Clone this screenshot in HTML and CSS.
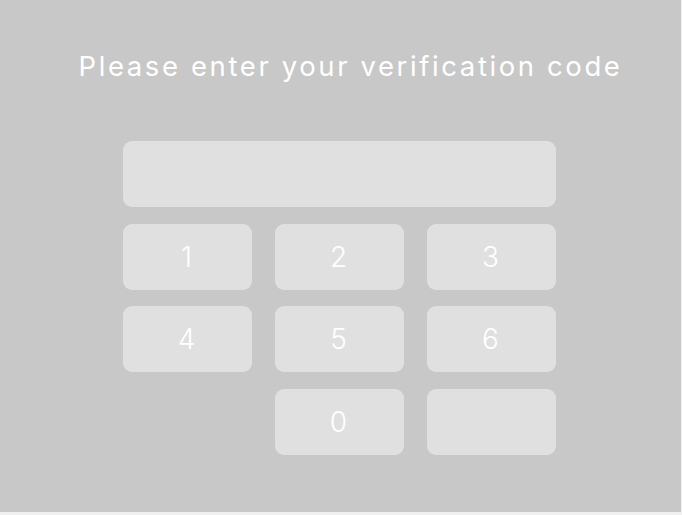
FILE: index.html
```html
<!DOCTYPE html>
<html>
<head>
<meta charset="utf-8">
<link rel="stylesheet" href="styles.css">
</head>
<body>
<div class="screen">
  <h1 class="title">Please enter your verification code</h1>
  <div class="pad">
    <div class="display"></div>
    <div class="key">1</div>
    <div class="key">2</div>
    <div class="key">3</div>
    <div class="key">4</div>
    <div class="key">5</div>
    <div class="key">6</div>
    <div class="key empty"></div>
    <div class="key">0</div>
    <div class="key"></div>
  </div>
</div>
</body>
</html>
```

FILE: styles.css
```css
html, body {
  margin: 0;
  padding: 0;
  background: #f0f0f0;
}
.screen {
  width: 681px;
  height: 512px;
  background: #c8c8c8;
  font-family: "Inter", "Open Sans", sans-serif;
  color: #ffffff;
  display: flex;
  flex-direction: column;
  align-items: center;
}
.title {
  margin: 49px 0 0 20px;
  font-size: 27.5px;
  font-weight: 400;
  letter-spacing: 2.6px;
  line-height: 34px;
  white-space: nowrap;
}
.pad {
  margin: 58px 2px 0 0;
  display: grid;
  grid-template-columns: repeat(3, 129px);
  grid-auto-rows: 66px;
  column-gap: 23px;
  row-gap: 16.5px;
}
.display {
  grid-column: 1 / 4;
  background: #e0e0e0;
  border-radius: 9px;
}
.key {
  background: #e0e0e0;
  border-radius: 9px;
  display: flex;
  align-items: center;
  justify-content: center;
  font-size: 28px;
  font-weight: 300;
  padding-right: 2px;
}
.key.empty {
  background: transparent;
}
```
